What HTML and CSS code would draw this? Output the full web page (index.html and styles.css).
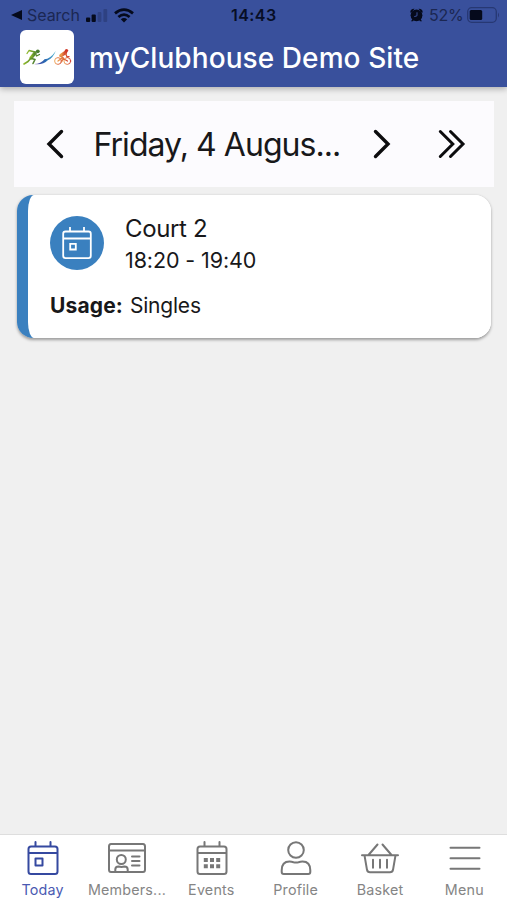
FILE: index.html
```html
<!DOCTYPE html>
<html lang="en">
<head>
<meta charset="utf-8">
<title>myClubhouse Demo Site</title>
<link rel="stylesheet" href="styles.css">
</head>
<body>
<header class="top">
  <div class="status">
    <div class="status-left">
      <svg class="back" viewBox="0 0 11 10"><path d="M0 5 11 0v10z"/></svg>
      <span class="search">Search</span>
      <svg class="signal" viewBox="0 0 22 13"><rect y="8.5" width="4.2" height="4.5" rx="1"/><rect x="5.6" y="5.5" width="4.2" height="7.5" rx="1"/><g opacity=".2"><rect x="11.6" y="3" width="3.8" height="10" rx="1"/><rect x="17.4" width="3.8" height="13" rx="1"/></g></svg>
      <svg class="wifi" viewBox="0 0 20 15"><g fill="none" stroke="#050a1c" stroke-width="2.8"><path d="M1 5.4Q10-2.2 19 5.4"/><path d="M4.4 9Q10 4.2 15.6 9"/></g><path d="M6.8 11.2Q10 8.8 13.2 11.2L10 14.6z"/></svg>
    </div>
    <span class="time">14:43</span>
    <div class="status-right">
      <svg class="alarm" viewBox="0 0 13 14"><circle cx="6.5" cy="7.3" r="5.9"/><path d="M.3 4.2Q.3.5 4.5.7L1.1 5zM12.7 4.2Q12.7.5 8.5.7l3.4 4.3zM2.5 11 1 13.2h2l1-1.4zM10.5 11 12 13.2h-2l-1-1.4z"/><path d="M7 4.3v3.5L4.300 8.6" fill="none" stroke="#3a509b"/></svg>
      <span class="percent">52%</span>
      <svg class="battery" viewBox="0 0 33 16"><rect x=".7" y=".7" width="28.6" height="14.6" rx="4" fill="none" stroke="#273873" stroke-width="1.3"/><rect x="2.7" y="3" width="12.5" height="10" rx="1.5"/><path d="M31 5.5q2 2.500 0 5z" fill="#273873"/></svg>
    </div>
  </div>
  <div class="brand">
    <div class="logo">
      <svg viewBox="0 0 54 54">
        <defs>
          <linearGradient id="swim" x1="0" x2="1"><stop stop-color="#6546a5"/><stop offset=".5" stop-color="#2867b2"/><stop offset="1" stop-color="#55b7d3"/></linearGradient>
          <linearGradient id="run" x1="0" x2="1"><stop stop-color="#8fb92a"/><stop offset="1" stop-color="#4a7d30"/></linearGradient>
          <linearGradient id="bike" x1="0" x2="1"><stop stop-color="#eda04c"/><stop offset="1" stop-color="#cf3728"/></linearGradient>
        </defs>
        <g fill="none" stroke="url(#run)" stroke-linecap="round" stroke-linejoin="round"><path d="M15 23 11 28" stroke-width="3.4"/><path d="M15 22 9 20.5 7 23.5M15 22l1.500 4 3-1.500" stroke-width="1.3"/><path d="M11 28 8 31.5 4 34M11.500 28.500l3.500 1-2 4" stroke-width="1.6"/></g><circle cx="17.8" cy="21.3" r="1.9" fill="#4a7d30"/>
        <path d="M14 34q7-.2 10.500-4.800 5.500 0 11.300-8.200-3 7.500-8 9.200-5 5.300-13.800 3.800z" fill="url(#swim)"/>
        <g fill="none" stroke="url(#bike)" stroke-linecap="round" stroke-linejoin="round"><circle cx="38" cy="31" r="3.4" stroke-width=".9"/><circle cx="47.3" cy="31" r="3.4" stroke-width=".9"/><path d="m45.500 22.500-4.500 3" stroke-width="3.4"/><path d="m40 26 3.500 2-2 4M45.500 23l1.500 4 2-.3M38 31l4-3 5.500 3" stroke-width="1.3"/></g><circle cx="46.5" cy="20.6" r="1.7" fill="#cf3728"/>
      </svg>
    </div>
    <h1>myClubhouse Demo Site</h1>
  </div>
</header>
<main>
  <nav class="datebar">
    <svg class="prev" viewBox="0 0 18 30"><path d="M15.500 2.500 3 15l12.500 12.500"/></svg>
    <span class="date">Friday, 4 Augus...</span>
    <svg class="next" viewBox="0 0 18 30"><path d="m2.500 2.500 12.500 12.500L2.500 27.500"/></svg>
    <svg class="last" viewBox="0 0 28 30"><path d="m2.300 2.500 12.500 12.500L2.300 27.500M12.500 2.500 25 15 12.500 27.500"/></svg>
  </nav>
  <article class="card">
    <div class="card-body">
      <div class="booking">
        <div class="circle"><svg viewBox="0 0 30 34"><path d="M3.500 5.500h23q2.300 0 2.300 2.300v22q0 2.300-2.300 2.300h-23q-2.300 0-2.300-2.300v-22q0-2.300 2.300-2.300zM1.200 12.500h27.600M8 1v4.500M22 1v4.500M8.200 17.900h5.600v5.600H8.200z"/></svg></div>
        <div class="details"><h2>Court 2</h2><p>18:20 - 19:40</p></div>
      </div>
      <p class="usage"><strong>Usage:</strong> <span>Singles</span></p>
    </div>
  </article>
</main>
<nav class="tabs">
  <a class="tab active"><svg viewBox="0 0 38 36"><path d="M7 6.500h24q2.500 0 2.500 2.500V31.500q0 2.500-2.500 2.500H7q-2.500 0-2.500-2.500V9q0-2.500 2.500-2.500zM4.500 13h29M11.500 2v4.500M26.500 2v4.500M11.500 18.500h7v7h-7z"/></svg><span>Today</span></a>
  <a class="tab"><svg viewBox="0 0 38 36"><path d="M3 4h32q2 0 2 2.500v23q0 2.500-2 2.500H3q-2 0-2-2.500v-23Q1 4 3 4zM1 10.500h36M7.300 32v-2.500q0-3 3.200-3 3 .9 6 0 3.200 0 3.200 3V32M24 16.500h7.500M24 21h7.500M24 25.500h7.500"/><circle cx="13.3" cy="19.5" r="4.5"/></svg><span>Members...</span></a>
  <a class="tab"><svg viewBox="0 0 38 36"><path d="M7 6.500h24q2.500 0 2.500 2.500V31.500q0 2.500-2.500 2.500H7q-2.500 0-2.500-2.500V9q0-2.500 2.500-2.500zM4.500 13h29M11.500 2v4.500M26.500 2v4.500"/><path class="solid" d="M10.800 18.100h4v4h-4zM17 18.100h4v4h-4zM23.200 18.100h4v4h-4zM10.800 24.300h4v4h-4zM17 24.300h4v4h-4zM23.200 24.300h4v4h-4z"/></svg><span>Events</span></a>
  <a class="tab"><svg viewBox="0 0 38 36"><circle cx="19" cy="10" r="7.8"/><path d="M12.500 21.500q2 0 4 .7 2.500.7 5 0 2-.7 4-.7 7.800 0 7.800 8.800V32q0 2-2 2H6.700q-2 0-2-2v-1.700q0-8.800 7.800-8.800z"/></svg><span>Profile</span></a>
  <a class="tab"><svg viewBox="0 0 38 36"><path d="M1 15.300h36M3.500 15.300 6 29.800q.5 2.500 3 2.500h20q2.500 0 3-2.500l2.500-14.500M7.500 15 16.500 4.500M30.500 15l-9-10.500M12 19.800v8M19 19.800v8M26 19.800v8"/></svg><span>Basket</span></a>
  <a class="tab"><svg viewBox="0 0 38 36"><path d="M4.500 7.800h29M4.500 18.300h29M4.500 28.800h29"/></svg><span>Menu</span></a>
</nav>
</body>
</html>
```
FILE: styles.css
```css
* { box-sizing: border-box; }
body {
  margin: 0;
  height: 900px;
  display: flex;
  flex-direction: column;
  overflow: hidden;
  background: #f0f0f0;
  color: #18181a;
  font-family: Inter, "Liberation Sans", sans-serif;
}
h1, h2, p { margin: 0; font-weight: 400; }
svg { display: block; flex: none; }
.top {
  height: 87px;
  background: #39509c;
  box-shadow: 0 2px 6px rgba(0, 0, 0, .28);
}
.status {
  height: 30px;
  display: grid;
  grid-template-columns: 231px 1fr auto;
  align-items: center;
  color: #1b2752;
  fill: #050a1c;
  font-size: 16px;
  line-height: 30px;
}
.status-left, .status-right { display: flex; align-items: center; }
.back { width: 11px; height: 10px; margin-left: 11px; }
.search { width: 52px; margin-left: 5px; letter-spacing: -.05px; }
.signal { width: 22px; height: 13px; margin-left: 7px; }
.wifi { width: 20px; height: 15px; margin-left: 6px; }
.time { color: #070e26; font-weight: 600; letter-spacing: .45px; }
.status-right { padding-right: 7px; }
.alarm { width: 13px; height: 14px; }
.percent { width: 44px; padding-left: 6px; letter-spacing: -.3px; white-space: nowrap; }
.battery { width: 33px; height: 16px; }
.brand { display: flex; align-items: flex-start; padding-left: 20px; }
.logo { width: 54px; height: 54px; border-radius: 6px; background: #fff; overflow: hidden; }
.brand h1 {
  margin-left: 15px;
  padding-top: 1px;
  color: #fff;
  font-size: 28px;
  font-weight: 450;
  line-height: 54px;
  letter-spacing: .08px;
  white-space: nowrap;
}
main { flex: 1; padding: 14px 13px 0 14px; }
.datebar {
  height: 86px;
  display: flex;
  align-items: center;
  padding-left: 31.5px;
  background: #fcfbfe;
  stroke: #0c0c0e;
  stroke-width: 3.4;
  stroke-linecap: round;
  stroke-linejoin: miter;
  fill: none;
}
.prev, .next { width: 18px; height: 30px; }
.date { width: 248px; margin-left: 30px; font-size: 32px; line-height: 44px; padding-top: 2px; letter-spacing: -.95px; white-space: nowrap; }
.next { margin-left: 31.5px; }
.last { width: 28px; height: 30px; margin-left: 47px; stroke-width: 3; }
.card {
  height: 143px;
  margin: 8px 3px 0;
  padding-left: 11px;
  border-radius: 16px;
  background: linear-gradient(to right, #3a80bf 40px, #fff 40px);
  box-shadow: 0 1.5px 3px rgba(0, 0, 0, .35);
  overflow: hidden;
}
.card-body { height: 143px; padding: 18px 22px; border-radius: 6px 16px 16px 6px / 16px; background: #fff; }
.booking { display: flex; height: 64px; }
.circle {
  width: 54px;
  height: 54px;
  margin-top: 3px;
  display: grid;
  place-items: center;
  border-radius: 50%;
  background: #3a80bf;
}
.circle svg { width: 30px; height: 34px; fill: none; stroke: #fff; stroke-width: 1.8; }
.details { margin-left: 21px; white-space: nowrap; }
.details h2 { font-size: 24px; line-height: 32px; letter-spacing: -.35px; }
.details p { font-size: 21.5px; line-height: 30px; letter-spacing: -.1px; }
.usage { margin-top: 14px; font-size: 21px; line-height: 30px; white-space: nowrap; }
.usage strong { font-weight: 700; letter-spacing: .15px; }
.usage span { margin-left: 1px; letter-spacing: -.2px; }
.tabs {
  height: 66px;
  display: grid;
  grid-template-columns: repeat(6, 1fr);
  padding: 5px 0 0 1px;
  border-top: 1px solid #dedede;
  background: #fff;
}
.tab { display: flex; flex-direction: column; align-items: center; color: #858585; }
.tab svg { width: 38px; height: 36px; fill: none; stroke: #777; stroke-width: 2; stroke-linejoin: round; stroke-linecap: round; }
.tab .solid { fill: #777; stroke: none; }
.tab span { font-size: 14.3px; line-height: 20px; margin: 4px 1px 0 0; letter-spacing: .2px; white-space: nowrap; }
.active { color: #4a5ab2; }
.active svg { stroke: #3549a0; }
```
